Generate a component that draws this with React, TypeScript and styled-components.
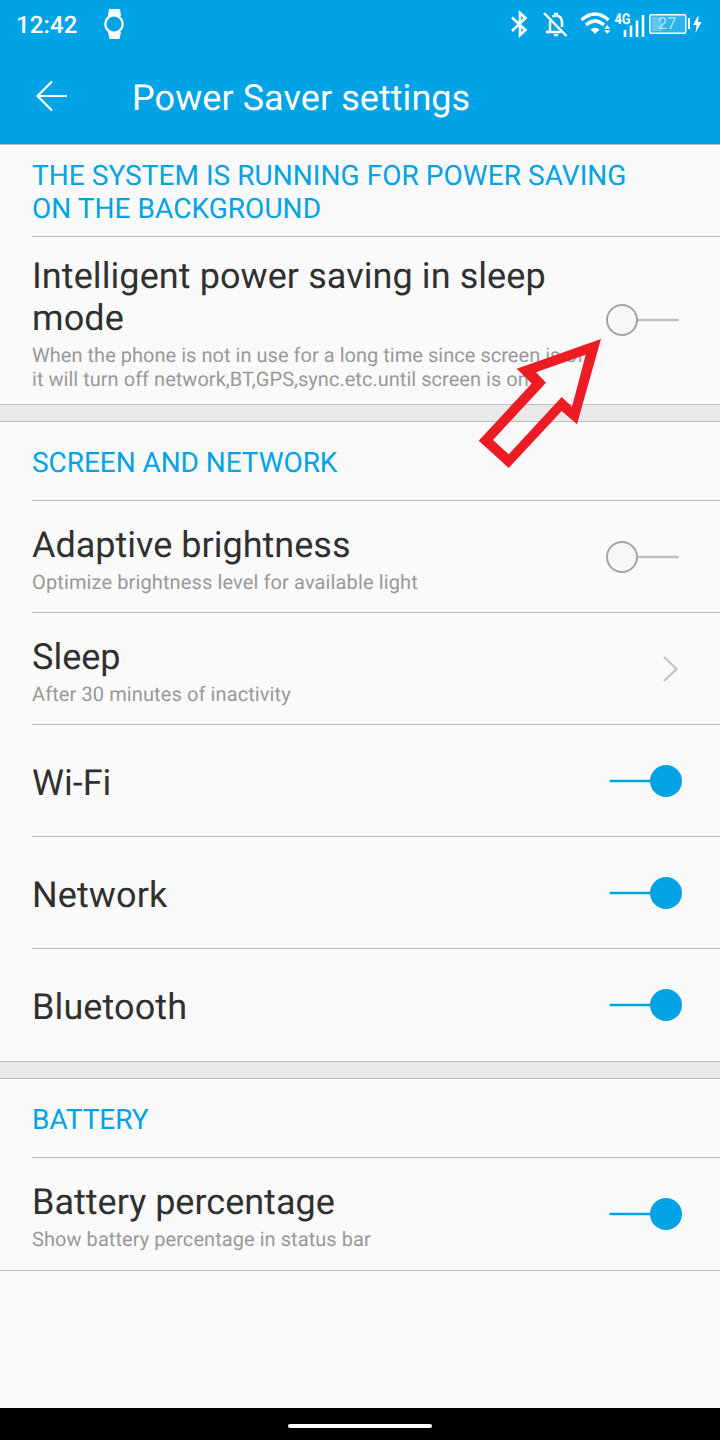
import React from 'react';
import styled, { createGlobalStyle } from 'styled-components';

const BLUE = '#00a3e6';

const Global = createGlobalStyle`
  * { box-sizing: border-box; }
  body {
    margin: 0;
    background: #fafafa;
    font-family: Roboto, "Liberation Sans", sans-serif;
    text-rendering: geometricPrecision;
  }
`;

const Screen = styled.div`
  position: relative;
  display: flex;
  flex-direction: column;
  width: 720px;
  height: 1440px;
  overflow: hidden;
  background: #fafafa;
`;

const Header = styled.header`
  height: 145px;
  background: ${BLUE};
  color: #fff;
  border-bottom: 1px solid #bdbdbd;
`;

const StatusBar = styled.div`
  display: flex;
  align-items: center;
  height: 48px;
  padding-left: 16px;
`;

const Clock = styled.span`
  width: 88px;
  font-size: 24px;
  font-weight: 500;
  line-height: 28px;
  letter-spacing: 0.15px;
  padding-top: 1px;
`;

const StatusIcons = styled.svg`
  display: block;
  margin-left: auto;
`;

const TitleBar = styled.div`
  display: flex;
  align-items: center;
  height: 96px;
  padding-left: 32px;
`;

const Title = styled.h1`
  margin: 4px 0 0 60px;
  font-size: 36px;
  font-weight: 400;
  line-height: 42px;
  letter-spacing: 0.06px;
`;

const Heading = styled.h2<{ $height: number; $spacing?: number }>`
  display: flex;
  align-items: center;
  height: ${(p) => p.$height}px;
  margin: 0 0 0 32px;
  padding: 2px 60px 0 0;
  border-bottom: 1px solid #bdbdbd;
  color: ${BLUE};
  font-size: 28px;
  font-weight: 400;
  line-height: 33px;
  letter-spacing: ${(p) => p.$spacing ?? -0.06}px;
`;

const Row = styled.div<{ $height?: number; $last?: boolean }>`
  display: flex;
  align-items: center;
  justify-content: space-between;
  height: ${(p) => p.$height ?? 112}px;
  margin-left: ${(p) => (p.$last ? 0 : 32)}px;
  padding: 0 36px 0 ${(p) => (p.$last ? 32 : 0)}px;
  border-bottom: 1px solid #bdbdbd;
`;

const Label = styled.div<{ $spacing?: number }>`
  color: #303030;
  font-size: 36px;
  line-height: 42px;
  letter-spacing: ${(p) => p.$spacing ?? 0}px;
  padding-top: 4px;
  white-space: pre-line;
`;

const Summary = styled.div<{ $spacing?: number }>`
  margin-top: 4px;
  color: #999;
  font-size: 20px;
  line-height: 24px;
  letter-spacing: ${(p) => p.$spacing ?? 0.1}px;
  white-space: pre;
`;

const TextBlock = styled.div`
  width: 560px;
`;

const Divider = styled.div`
  height: 17px;
  background: #e9e9e9;
  border-bottom: 1px solid #bdbdbd;
`;

const NavBar = styled.footer`
  display: flex;
  align-items: center;
  justify-content: center;
  height: 32px;
  margin-top: auto;
  padding-top: 4px;
  background: #000;
`;

const Pill = styled.div`
  width: 144px;
  height: 4px;
  border-radius: 2px;
  background: #fff;
`;

const Pointer = styled.svg`
  position: absolute;
  left: 470px;
  top: 330px;
`;

const ToggleIcon = styled.svg<{ $raised?: boolean }>`
  margin-bottom: ${(p) => (p.$raised ? 1 : 0)}px;
`;

const Toggle = ({ on = false, raised = false }: { on?: boolean; raised?: boolean }) => (
  <ToggleIcon $raised={raised} width="80" height="34" viewBox="0 0 80 34">
    {on ? (
      <>
        <path d="M6.500 17H50" stroke={BLUE} strokeWidth="2.400" strokeLinecap="round" />
        <circle cx="62" cy="17" r="16" fill={BLUE} />
      </>
    ) : (
      <>
        <path d="M34 17H73.500" stroke="#bfbfbf" strokeWidth="2.400" strokeLinecap="round" />
        <circle cx="18" cy="17" r="15" fill="#f7f7f7" stroke="#a0a5aa" strokeWidth="2" />
      </>
    )}
  </ToggleIcon>
);

const Chevron = () => (
  <svg width="80" height="34" viewBox="0 0 80 34" fill="none">
    <path d="M60 5L72.500 17L60 29" stroke="#c4c4c4" strokeWidth="2.400" />
  </svg>
);

const Watch = () => (
  <svg width="22" height="32" viewBox="0 0 22 32">
    <path d="M5 1H16L17 8H4ZM4 24H17L15.500 31H5.500Z" fill="#fff" />
    <circle cx="10" cy="16" r="8.700" fill={BLUE} stroke="#fff" strokeWidth="2.300" />
  </svg>
);

const Back = () => (
  <svg width="40" height="40" viewBox="0 0 40 40" fill="none" stroke="#fff" strokeWidth="2.200">
    <path d="M20 5.500L5.500 20L20 34.500M5 20H35" />
  </svg>
);

const SystemIcons = () => (
  <StatusIcons width="220" height="48" viewBox="500 0 220 48" fill="none" stroke="#fff">
    <path d="M512 17.500L525.500 30L520 35V13L525.500 18L512 31" strokeWidth="2.600" />
    <path d="M544 13L566.500 36" strokeWidth="2.500" />
    <path d="M550 31V23C550 21 550.300 19.500 551 18.500M552.500 16.800C557 13.500 562 17 562 22V27M546 32H561" strokeWidth="2.500" />
    <path d="M554 16V12.800H558V16Z M553.500 34H558.500Q558 36.500 556 36.500T553.500 34Z" fill="#fff" stroke="none" />
    <path d="M581.500 20Q595 8 608.500 20M586 25Q595 17 604 25" strokeWidth="3.200" />
    <path d="M590.500 29.500Q595 26 599.500 29.500L595 34Z" fill="#fff" stroke="none" />
    <path d="M604.300 28.800L607.300 25L610.300 28.800ZM604.300 30.200L607.300 34L610.300 30.200Z" fill="#fff" stroke="none" />
    <text x="614.500" y="23.700" fill="#fff" stroke="none" fontFamily="Roboto, sans-serif" fontSize="15" fontWeight="700" textLength="16" lengthAdjust="spacingAndGlyphs">4G</text>
    <path d="M625 30V37M631 25.500V37M637 20.500V37M643 15V37" strokeWidth="2.600" />
    <rect x="649.800" y="14.800" width="36" height="18.500" rx="1.500" fill="#2eb3eb" strokeWidth="1.500" />
    <rect x="652" y="17" width="10" height="14" fill="#66c7f0" stroke="none" />
    <text x="667" y="29.300" textAnchor="middle" fill="#b8e4f8" stroke="none" fontFamily="Roboto, sans-serif" fontSize="16.500">27</text>
    <path d="M689 18V29" strokeWidth="2" />
    <path d="M698.500 15L693 25H696.500L695.500 33L701.500 22H698Z" fill="#fff" stroke="none" />
  </StatusIcons>
);

const App = () => (
  <Screen>
    <Global />
    <Header>
      <StatusBar>
        <Clock>12:42</Clock>
        <Watch />
        <SystemIcons />
      </StatusBar>
      <TitleBar>
        <Back />
        <Title>Power Saver settings</Title>
      </TitleBar>
    </Header>

    <Heading $height={92} $spacing={0.05}>THE SYSTEM IS RUNNING FOR POWER SAVING ON THE BACKGROUND</Heading>
    <Row $height={168} $last>
      <TextBlock>
        <Label $spacing={0.08}>{'Intelligent power saving in sleep\nmode'}</Label>
        <Summary $spacing={0.03}>{'When the phone is not in use for a long time since screen is off,\nit will turn off network,BT,GPS,sync.etc.until screen is on.'}</Summary>
      </TextBlock>
      <Toggle raised />
    </Row>
    <Divider />

    <Heading $height={79}>SCREEN AND NETWORK</Heading>
    <Row>
      <TextBlock>
        <Label>Adaptive brightness</Label>
        <Summary $spacing={0.12}>Optimize brightness level for available light</Summary>
      </TextBlock>
      <Toggle />
    </Row>
    <Row>
      <TextBlock>
        <Label>Sleep</Label>
        <Summary>After 30 minutes of inactivity</Summary>
      </TextBlock>
      <Chevron />
    </Row>
    <Row>
      <Label>Wi-Fi</Label>
      <Toggle on />
    </Row>
    <Row>
      <Label $spacing={0.1}>Network</Label>
      <Toggle on />
    </Row>
    <Row $height={113} $last>
      <Label $spacing={0.1}>Bluetooth</Label>
      <Toggle on />
    </Row>
    <Divider />

    <Heading $height={79}>BATTERY</Heading>
    <Row $height={113} $last>
      <TextBlock>
        <Label>Battery percentage</Label>
        <Summary $spacing={0.06}>Show battery percentage in status bar</Summary>
      </TextBlock>
      <Toggle on />
    </Row>

    <NavBar>
      <Pill />
    </NavBar>

    <Pointer width="140" height="145" viewBox="470 330 140 145">
      <path
        fillRule="evenodd"
        fill="#ed1c24"
        d="M601 339L516.700 368.700L531.700 383.500L478.700 440.700L508.700 468L561.700 411L577 424.300ZM585.700 354.700L536 372.300L546 382.700L493 440L508.700 454.300L561.700 397L572 406.700Z"
      />
    </Pointer>
  </Screen>
);

export default App;
